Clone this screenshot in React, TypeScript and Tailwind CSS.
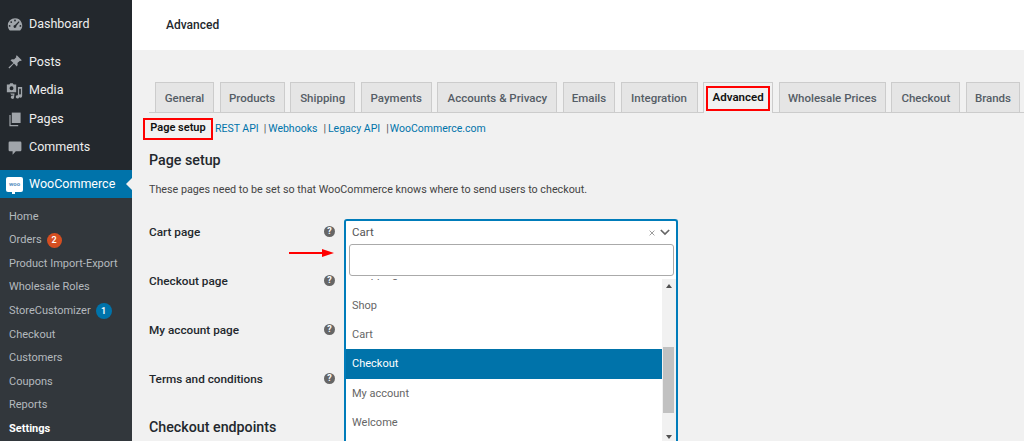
import React from "react";

const font = "font-['Roboto','Noto_Sans',sans-serif]";

const Dash = () => (
  <svg viewBox="0 0 20 20" className="w-[18px] h-[18px]" fill="#a0a5aa">
    <path fillRule="evenodd" d="M10 2.500a8 8 0 0 0-8 8c0 2.200.9 4.200 2.300 5.600h11.400A8 8 0 0 0 10 2.500zM10 4a1 1 0 1 1 0 2 1 1 0 0 1 0-2zM5.800 5.800a1 1 0 1 1 0 2 1 1 0 0 1 0-2zM14.200 5.800l.8.8-3.600 4.400a1.600 1.600 0 1 1-1.400-1zM4 10a1 1 0 1 1 0 2 1 1 0 0 1 0-2zM16 10a1 1 0 1 1 0 2 1 1 0 0 1 0-2z" />
  </svg>
);
const Pin = () => (
  <svg viewBox="0 0 20 20" className="w-[16px] h-[16px]" fill="#a0a5aa">
    <path d="M12.200 1.500l6.300 6.300-1.300 1.100-1-.6-3.200 3.100c.6 1.600.3 3.200-.7 4.300L8.700 12 3 18.200 1.800 17 8 11.300 4.400 7.700c1.100-1 2.700-1.300 4.300-.7l3.100-3.200-.6-1z" />
  </svg>
);
const Media = () => (
  <svg viewBox="0 0 20 20" className="w-[17px] h-[17px]" fill="#a0a5aa">
    <path fillRule="evenodd" d="M1 3h3l1-1.500h3L9 3h3v9H1zM6.500 5a2.300 2.300 0 1 0 0 4.600 2.300 2.300 0 0 0 0-4.600z" />
    <path d="M14 6h5v10.500a2 2 0 1 1-1.500-1.900V8H15.500v9.500a2 2 0 1 1-1.500-1.900zM5 13.500h5l-.5 4.500a1.900 1.900 0 1 1-1-1.700v-1.300H6z" />
  </svg>
);
const Pages = () => (
  <svg viewBox="0 0 20 20" className="w-[16px] h-[16px]" fill="#a0a5aa">
    <path d="M6 2h11v13H6z" />
    <path d="M3 5h1.500v12.500H14V19H3z" />
  </svg>
);
const Comment = () => (
  <svg viewBox="0 0 20 20" className="w-[16px] h-[16px]" fill="#a0a5aa">
    <path d="M3.500 2h13A1.500 1.500 0 0 1 18 3.500v9a1.500 1.500 0 0 1-1.500 1.500H11l-4 4.500V14H3.500A1.500 1.500 0 0 1 2 12.500v-9A1.500 1.500 0 0 1 3.500 2z" />
  </svg>
);
const Woo = () => (
  <div className="relative w-[17px] h-[15px] bg-white rounded-[2px] flex items-center justify-center shrink-0">
    <span className="text-[6px] leading-none font-bold text-[#5a8fc0]">woo</span>
    <span className="absolute bottom-[-2px] left-[6px] w-[3px] h-[3px] bg-white" />
  </div>
);
const Help = () => (
  <span className="w-[11px] h-[11px] rounded-full bg-[#666] text-white text-[9px] font-bold leading-[11px] text-center block shrink-0">?</span>
);

const top = [
  { t: "Posts", i: <Pin /> },
  { t: "Media", i: <Media /> },
  { t: "Pages", i: <Pages /> },
  { t: "Comments", i: <Comment /> },
];

const sub: [string, React.ReactNode?][] = [
  ["Home"],
  ["Orders", <span className="ml-[5px] w-[15px] h-[15px] rounded-full bg-[#d54e21] text-white text-[9px] font-semibold leading-[15px] text-center">2</span>],
  ["Product Import-Export"],
  ["Wholesale Roles"],
  ["StoreCustomizer", <span className="ml-[5px] w-[16px] h-[16px] rounded-full bg-[#0073aa] text-white text-[9px] font-semibold leading-[16px] text-center">1</span>],
  ["Checkout"],
  ["Customers"],
  ["Coupons"],
  ["Reports"],
];

const tabs: [string, string][] = [
  ["General", "w-[59px]"],
  ["Products", "w-[65px]"],
  ["Shipping", "w-[65px]"],
  ["Payments", "w-[71px]"],
  ["Accounts & Privacy", "w-[120px]"],
  ["Emails", "w-[52px]"],
  ["Integration", "w-[77px]"],
];
const tabs2: [string, string][] = [
  ["Wholesale Prices", "w-[107px]"],
  ["Checkout", "w-[69px]"],
  ["Brands", "w-[54px]"],
];

const Tab = ({ t, w }: { t: string; w: string }) => (
  <div className={`${w} h-[30px] pt-[2px] bg-[#e5e5e5] border border-b-0 border-[#ccc] flex items-center justify-center text-[11.500px] font-medium text-[#555d66] shrink-0`}>
    {t}
  </div>
);

const rows = ["Cart page", "Checkout page", "My account page", "Terms and conditions"];

export default function App() {
  return (
    <div className={`${font} w-[1024px] h-[441px] overflow-hidden flex bg-[#f1f1f1] text-[#23282d]`}>
      <aside className="w-[132px] shrink-0 bg-[#23282d] flex flex-col text-[12.500px] text-[#eee]">
        <div className="h-[48px] flex items-center gap-[5px] pl-[6px] pt-[1px]">
          <Dash />
          <span>Dashboard</span>
        </div>
        <div className="flex flex-col">
          {top.map((x) => (
            <div key={x.t} className="h-[28.500px] flex items-center gap-[6px] pl-[6px]">
              <span className="w-[17px] flex justify-center">{x.i}</span>
              <span>{x.t}</span>
            </div>
          ))}
        </div>
        <div className="relative mt-[8px] h-[28px] bg-[#0073aa] flex items-center gap-[6px] pl-[6px] text-white">
          <Woo />
          <span>WooCommerce</span>
          <span className="absolute right-0 top-[8px] w-0 h-0 border-y-[6px] border-y-transparent border-r-[6px] border-r-[#f1f1f1]" />
        </div>
        <div className="flex-1 bg-[#32373c] pt-[7px] pl-[9px] text-[11px] text-[#b4b9be]">
          {sub.map(([t, b]) => (
            <div key={t} className="h-[23.600px] flex items-center whitespace-nowrap">
              <span>{t}</span>
              {b}
            </div>
          ))}
          <div className="h-[23.600px] flex items-center font-bold text-white">Settings</div>
        </div>
      </aside>

      <main className="flex-1 min-w-0 flex flex-col">
        <header className="h-[50px] bg-white flex items-center pl-[34px] text-[12px] font-medium text-[#23282d]">
          Advanced
        </header>
        <div className="pl-[17px] pt-[32px]">
          <div className="flex items-end border-b border-[#ccc] h-[31px] w-[875px] pl-[6px] gap-[5.600px]">
            {tabs.map(([t, w]) => (
              <Tab key={t} t={t} w={w} />
            ))}
            <div className="w-[70px] h-[31px] bg-[#f1f1f1] border border-b-0 border-[#ccc] flex items-center justify-center shrink-0 p-[2px] relative top-[1px]">
              <span className="w-full h-[25px] border-2 border-[#f00] flex items-center justify-center text-[11.500px] font-semibold text-[#111]">Advanced</span>
            </div>
            {tabs2.map(([t, w]) => (
              <Tab key={t} t={t} w={w} />
            ))}
          </div>

          <div className="flex items-center h-[21px] mt-[5px] -ml-[6px] text-[10.500px] text-[#0073aa]">
            <span className="w-[70px] h-[22px] border-2 border-[#f00] flex items-center justify-center text-[11px] font-semibold text-[#111] shrink-0">Page setup</span>
            <span className="ml-[2px]">REST API</span>
            <span className="ml-[5px] text-[#555]">|</span>
            <span className="ml-[2px]">Webhooks</span>
            <span className="ml-[6px] text-[#555]">|</span>
            <span className="ml-[2px]">Legacy API</span>
            <span className="ml-[6px] text-[#555]">|</span>
            <span className="ml-[1px]">WooCommerce.com</span>
          </div>

          <h2 className="mt-[11px] text-[14.250px] leading-[20px] font-medium text-[#23282d]">Page setup</h2>
          <p className="mt-[11px] text-[10.750px] leading-[18px] text-[#444]">
            These pages need to be set so that WooCommerce knows where to send users to checkout.
          </p>

          <div className="relative mt-[21px]">
            <div className="flex flex-col w-[186px]">
              {rows.map((r) => (
                <div key={r} className="h-[49.100px] pt-[2px] flex justify-between text-[11.750px] font-medium text-[#23282d]">
                  <span className="leading-[20px]">{r}</span>
                  <span className="mt-[4px]"><Help /></span>
                </div>
              ))}
              <h2 className="mt-[1px] text-[14.250px] leading-[20px] font-medium whitespace-nowrap">Checkout endpoints</h2>
            </div>

            <div className="absolute left-[195px] -top-[1px] w-[334px] h-[240px] bg-white border-2 border-b-0 border-[#007cba] rounded-t-[3px]">
              <div className="h-[23px] flex items-center justify-between pl-[6px] pr-[6px] text-[11.500px] text-[#555]">
                <span>Cart</span>
                <span className="flex items-center gap-[5px]">
                  <svg viewBox="0 0 10 10" className="w-[6px] h-[6px]" stroke="#999" strokeWidth="1.600"><path d="M1 1l8 8M9 1l-8 8" /></svg>
                  <svg viewBox="0 0 12 8" className="w-[10px] h-[7px]" fill="none" stroke="#666" strokeWidth="2"><path d="M1 1l5 5 5-5" /></svg>
                </span>
              </div>
              <div className="ml-[3px] mr-[2px] h-[32px] bg-white border border-[#aaa] rounded-[3px]" />
              <div className="mt-[3px] flex h-[200px]">
                <div className="flex-1 min-w-0 overflow-hidden text-[11px] text-[#666]">
                  <div className="h-[29.250px] -mt-[19.500px] pt-[1.500px] flex items-center pl-[6px]">Shopping</div>
                  <div className="h-[29.250px] mt-[2px] pt-[1.500px] flex items-center pl-[6px]">Shop</div>
                  <div className="h-[29.250px] pt-[1.500px] flex items-center pl-[6px]">Cart</div>
                  <div className="h-[29.250px] flex items-center pl-[6px] bg-[#0073aa] text-white">Checkout</div>
                  <div className="h-[29.250px] pt-[1.500px] flex items-center pl-[6px]">My account</div>
                  <div className="h-[29.250px] pt-[1.500px] flex items-center pl-[6px]">Welcome</div>
                </div>
                <div className="w-[14px] bg-[#f1f1f1] flex flex-col items-center relative">
                  <span className="absolute top-[5px] w-0 h-0 border-x-[3px] border-x-transparent border-b-[4px] border-b-[#505050]" />
                  <span className="absolute top-[68px] left-[1px] w-[11px] h-[66px] bg-[#c1c1c1]" />
                  <span className="absolute top-[156px] w-0 h-0 border-x-[3px] border-x-transparent border-t-[4px] border-t-[#505050]" />
                </div>
              </div>
            </div>

            <svg viewBox="0 0 45 8" className="absolute left-[140px] top-[29px] w-[45px] h-[8px]">
              <path d="M0 3h34v2H0z" fill="#f00" />
              <path d="M33 0l12 4-12 4z" fill="#f00" />
            </svg>
          </div>
        </div>
      </main>
    </div>
  );
}
